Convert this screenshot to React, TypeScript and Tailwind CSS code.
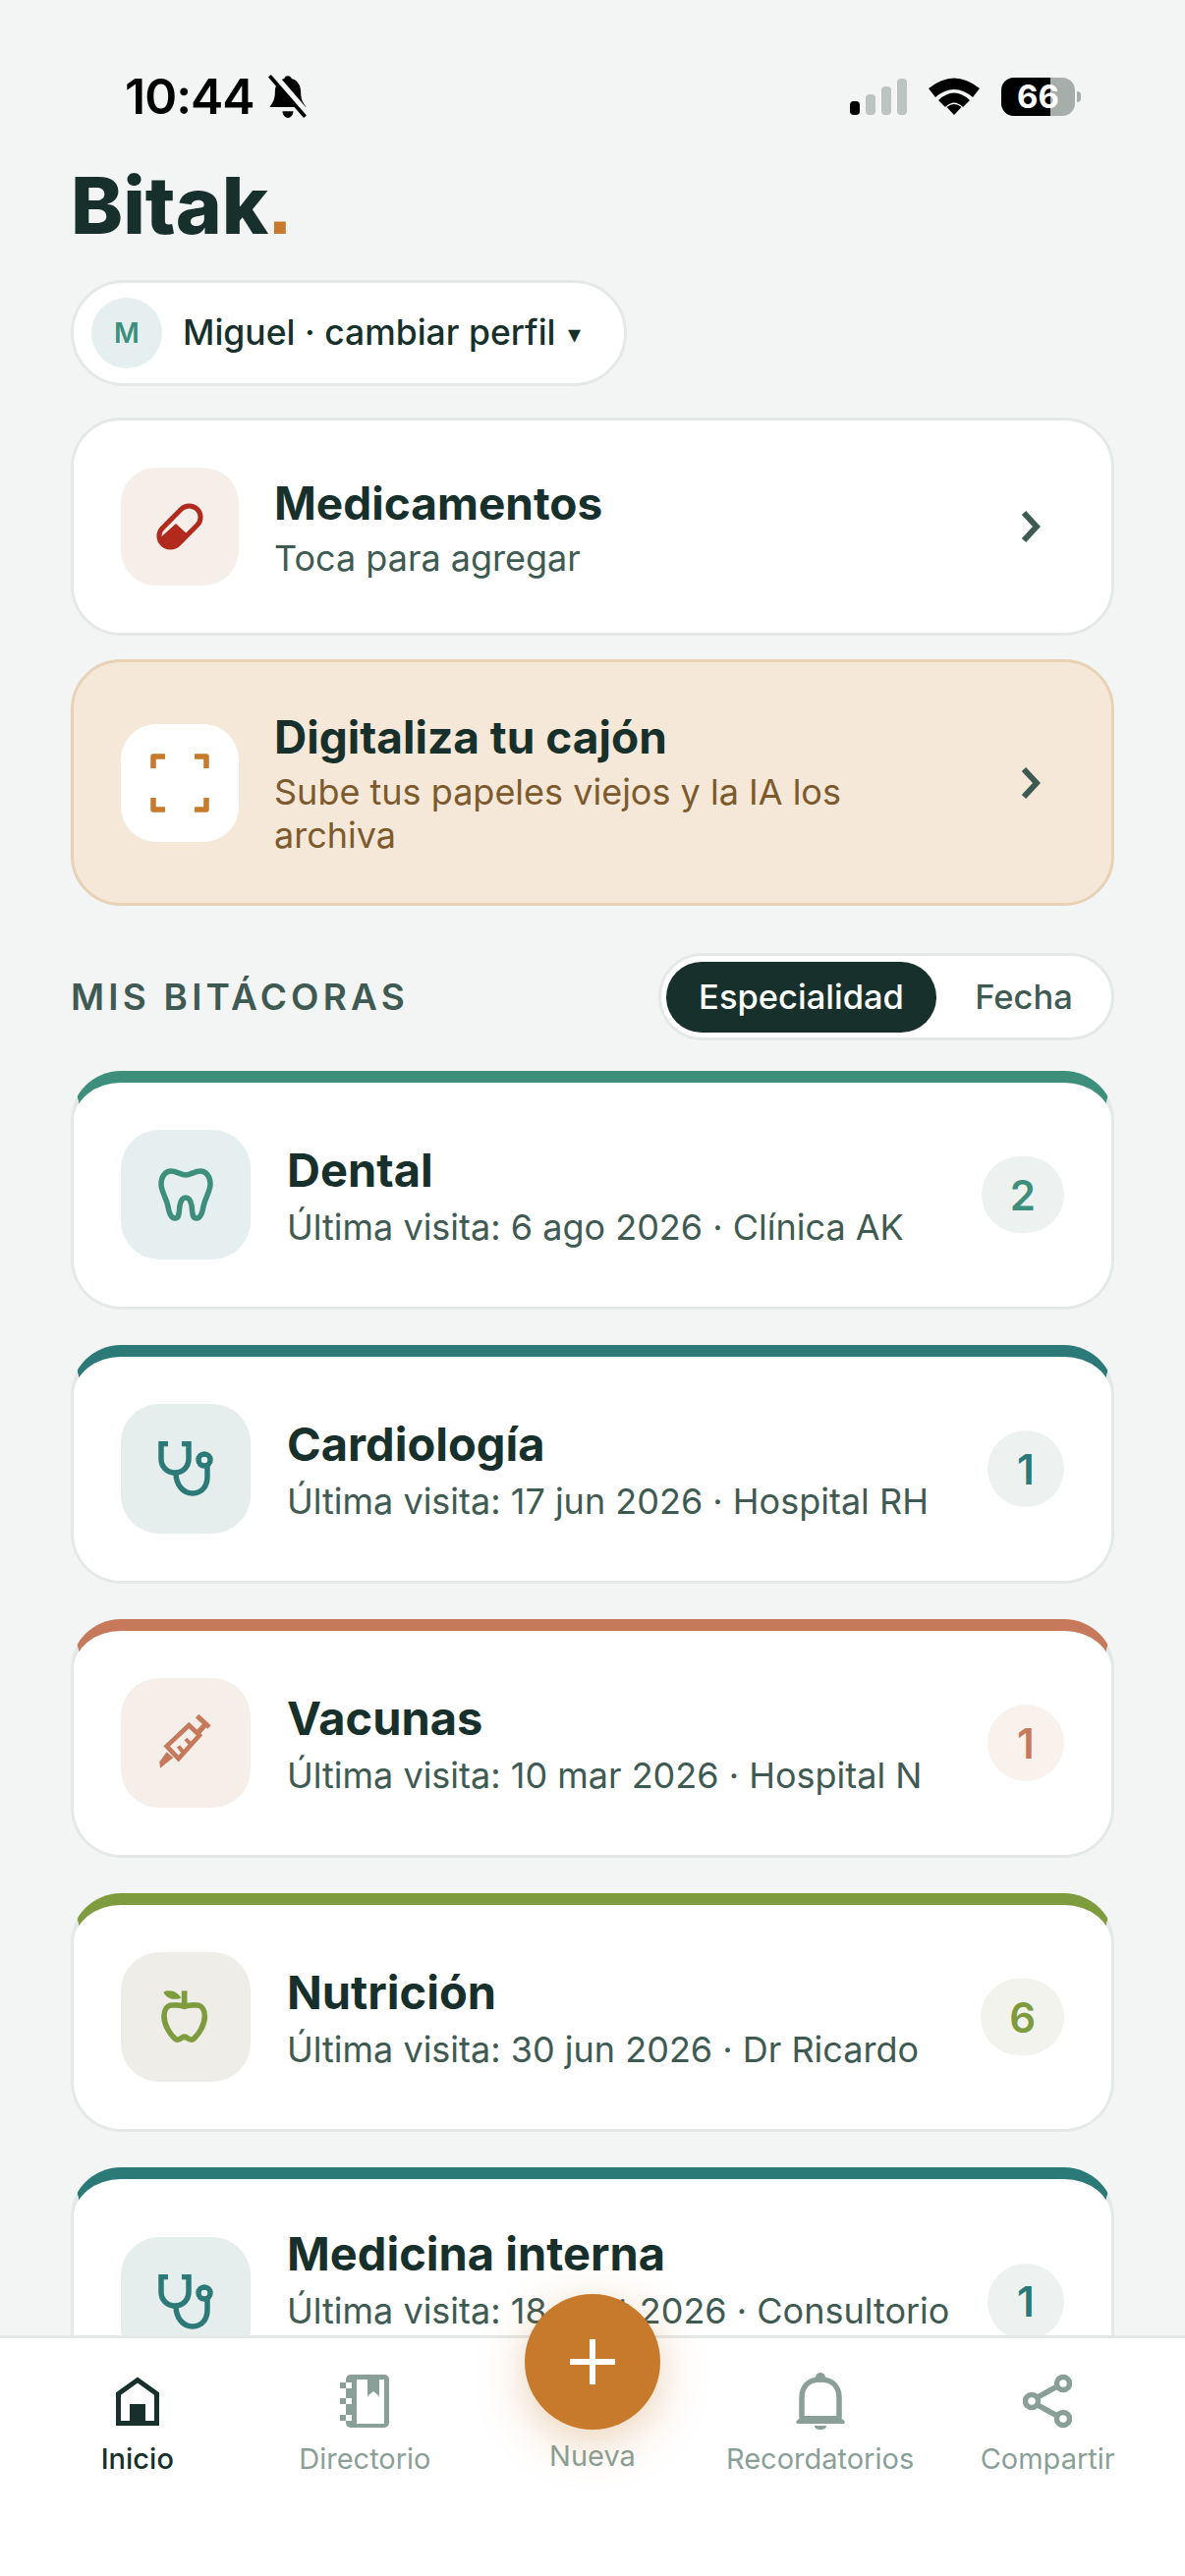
import type { ReactNode } from "react";

function BellOffIcon() {
  return (
    <svg width="44" height="46" viewBox="0 0 40 42" className="ml-[12px]">
      <path d="M20 2c2 0 3 1 3.400 2.600C29 6 32 11 32 17c0 7 2 10 5 14H3c3-4 5-7 5-14 0-6 3-11 8.600-12.400C17 3 18 2 20 2z" fill="#000" />
      <path d="M15 35h10c0 3-2 6-5 6s-5-3-5-6z" fill="#000" />
      <path d="M6 1l32 37" stroke="#f3f5f4" strokeWidth="7" />
      <path d="M3 2l33 38" stroke="#000" strokeWidth="3.500" />
    </svg>
  );
}

function SignalIcon() {
  return (
    <svg width="58" height="37" viewBox="0 0 58 37">
      <rect x="0" y="23" width="10" height="14" rx="4" fill="#000" />
      <rect x="16" y="16" width="10" height="21" rx="4" fill="#bcc4c1" />
      <rect x="32" y="8" width="10" height="29" rx="4" fill="#bcc4c1" />
      <rect x="48" y="0" width="10" height="37" rx="4" fill="#bcc4c1" />
    </svg>
  );
}

function WifiIcon() {
  return (
    <svg width="52" height="38" viewBox="0 0 52 38" fill="#000">
      <path d="M0 11Q26-10 52 11L45 20Q26 4 7 20z" />
      <path d="M10 23Q26 8 42 23L35 30Q26 21 17 30z" />
      <path d="M26 38L18.500 30Q26 24 33.500 30z" />
    </svg>
  );
}

function PillIcon() {
  return (
    <svg width="48" height="48" viewBox="0 0 48 48" fill="none">
      <defs>
        <clipPath id="pill-clip">
          <rect x="-1" y="12.500" width="50" height="23" rx="11.500" transform="rotate(-45 24 24)" />
        </clipPath>
      </defs>
      <rect x="-1" y="12.500" width="50" height="23" rx="11.500" transform="rotate(-45 24 24)" stroke="#b2291e" strokeWidth="5" />
      <path d="M0 39L20 21l12 11L20 48H0z" fill="#b2291e" clipPath="url(#pill-clip)" />
    </svg>
  );
}

function ScanIcon() {
  return (
    <svg width="60" height="60" viewBox="0 0 60 60" fill="none" stroke="#c77a2b" strokeWidth="5.500" strokeLinejoin="round">
      <path d="M3 15V3h12" />
      <path d="M45 3h12v12" />
      <path d="M3 45v12h12" />
      <path d="M45 57h12V45" />
    </svg>
  );
}

function ToothIcon({ color }: { color: string }) {
  return (
    <svg width="56" height="56" viewBox="0 0 56 56" fill="none" stroke={color} strokeWidth="5.500">
      <path d="M28 8c-5 0-9-4-15-4C7 4 3 10 3 17c0 8 5 13 7 23 1 6 3 12 7 12 5 0 4-7 5-13 1-5 3-8 6-8s5 3 6 8c1 6 0 13 5 13 4 0 6-6 7-12 2-10 7-15 7-23 0-7-4-13-10-13-6 0-10 4-15 4z" />
    </svg>
  );
}

function StethoscopeIcon({ color }: { color: string }) {
  return (
    <svg width="56" height="56" viewBox="0 0 56 56" fill="none" stroke={color} strokeWidth="5.500">
      <path d="M10 2.500H3V18c0 8 6 14 14 14s14-6 14-14V2.500h-7" />
      <path d="M18 32c0 12 7 21 17 21s15-8 15-17V26" />
      <circle cx="47" cy="19" r="6" />
    </svg>
  );
}

function SyringeIcon({ color }: { color: string }) {
  return (
    <svg width="80" height="80" viewBox="0 0 240 240" fill="none">
      <path d="M62 130L130 66 162 97 98 168z" stroke={color} strokeWidth="14" />
      <path d="M113 150L98 130M136 125L120 108" stroke={color} strokeWidth="12" />
      <path d="M158 88L178 66" stroke={color} strokeWidth="16" />
      <path d="M155 38L192 72" stroke={color} strokeWidth="15" />
      <path d="M62 148L40 178 42 197 82 165z" fill={color} />
    </svg>
  );
}

function AppleIcon({ color }: { color: string }) {
  return (
    <svg width="80" height="80" viewBox="0 0 240 240" fill="none">
      <path d="M116 88C100 82 85 84 78 84 62 84 54 100 54 118 54 145 72 172 86 185 92 191 100 190 106 185 112 180 120 180 126 185 132 190 140 191 146 185 160 172 178 145 178 118 178 100 170 84 154 84 147 84 132 82 116 88z" stroke={color} strokeWidth="17" />
      <path d="M116 40V92" stroke={color} strokeWidth="17" />
      <path d="M52 44C70 34 95 42 106 62 85 70 62 65 52 44z" fill={color} />
    </svg>
  );
}

function HomeIcon() {
  return (
    <svg width="44" height="50" viewBox="0 0 44 50" fill="none">
      <path d="M2.500 47.500V17.500L22 3.500l19.500 14v30z" stroke="#17302b" strokeWidth="5" />
      <rect x="14" y="28" width="16" height="20" fill="#17302b" />
    </svg>
  );
}

function NotebookIcon() {
  return (
    <svg width="50" height="54" viewBox="0 0 50 54">
      <rect x="6" y="0" width="44" height="54" rx="5" fill="#8a9f98" />
      <rect x="17" y="5" width="28" height="45" fill="#fff" />
      <path d="M28 5h12v17l-6-5-6 5z" fill="#8a9f98" />
      <rect x="0" y="8" width="6" height="6" fill="#8a9f98" />
      <rect x="6" y="8" width="6" height="6" fill="#fff" />
      <rect x="0" y="24" width="6" height="6" fill="#8a9f98" />
      <rect x="6" y="24" width="6" height="6" fill="#fff" />
      <rect x="0" y="41" width="6" height="6" fill="#8a9f98" />
      <rect x="6" y="41" width="6" height="6" fill="#fff" />
    </svg>
  );
}

function BellIcon() {
  return (
    <svg width="50" height="58" viewBox="0 0 50 58" fill="none">
      <path d="M6 46V26C6 14 13 7 25 7s19 7 19 19v20" stroke="#8a9f98" strokeWidth="5.500" />
      <circle cx="25" cy="5" r="5" fill="#8a9f98" />
      <path d="M0 50l6-6h38l6 6-1 2H1z" fill="#8a9f98" />
      <path d="M19 54h12c0 3-3 4-6 4s-6-1-6-4z" fill="#8a9f98" />
    </svg>
  );
}

function ShareIcon() {
  return (
    <svg width="50" height="54" viewBox="0 0 50 54" fill="none" stroke="#8a9f98" strokeWidth="5.500">
      <circle cx="41" cy="9" r="6.500" />
      <circle cx="9" cy="27" r="6.500" />
      <circle cx="41" cy="45" r="6.500" />
      <path d="M15 23l20-11M15 31l20 11" />
    </svg>
  );
}

function Chevron() {
  return (
    <svg width="20" height="34" viewBox="0 0 20 34" fill="none" stroke="#3f5a52" strokeWidth="6" className="shrink-0">
      <path d="M3 3l13 14L3 31" />
    </svg>
  );
}

type Entry = {
  name: string;
  detail: string;
  count: string;
  accent: string;
  boxBg: string;
  badgeBg: string;
  badgeText: string;
  icon: ReactNode;
  tall?: boolean;
};

const entries: Entry[] = [
  { name: "Dental", detail: "Última visita: 6 ago 2026 · Clínica AK", count: "2", accent: "border-t-[#3d8f7c]", boxBg: "bg-[#e6eff0]", badgeBg: "bg-[#edf2f0]", badgeText: "text-[#3d8f7c]", icon: <ToothIcon color="#3d8f7c" /> },
  { name: "Cardiología", detail: "Última visita: 17 jun 2026 · Hospital RH", count: "1", accent: "border-t-[#2b7a78]", boxBg: "bg-[#e6eded]", badgeBg: "bg-[#edf2f1]", badgeText: "text-[#2b7a78]", icon: <StethoscopeIcon color="#2b7a78" /> },
  { name: "Vacunas", detail: "Última visita: 10 mar 2026 · Hospital N", count: "1", accent: "border-t-[#c67a5b]", boxBg: "bg-[#f5eee9]", badgeBg: "bg-[#f8f1ec]", badgeText: "text-[#c67a5b]", icon: <SyringeIcon color="#c67a5b" /> },
  { name: "Nutrición", detail: "Última visita: 30 jun 2026 · Dr Ricardo", count: "6", accent: "border-t-[#7e9c3e]", boxBg: "bg-[#efede8]", badgeBg: "bg-[#f2f3ed]", badgeText: "text-[#7e9c3e]", icon: <AppleIcon color="#7e9c3e" /> },
  // this one wraps to a second line in the app, which sits behind the nav
  { name: "Medicina interna", detail: "Última visita: 18 sept 2026 · Consultorio", count: "1", accent: "border-t-[#2b7a78]", boxBg: "bg-[#e6eded]", badgeBg: "bg-[#edf2f1]", badgeText: "text-[#2b7a78]", icon: <StethoscopeIcon color="#2b7a78" />, tall: true },
];

function EntryCard({ entry }: { entry: Entry }) {
  return (
    <div className={`flex shrink-0 items-center rounded-[51px] border-x-[3px] border-b-[3px] border-t-[12px] border-x-[#e4e9e7] border-b-[#e4e9e7] bg-white px-[48px] ${entry.tall ? "h-[264px]" : "h-[243px]"} ${entry.accent}`}>
      <div className={`flex h-[132px] w-[132px] shrink-0 items-center justify-center rounded-[39px] ${entry.boxBg}`}>
        {entry.icon}
      </div>
      <div className={`ml-[37px] min-w-0 flex-1 ${entry.tall ? "pb-[44px]" : "pt-[4px]"}`}>
        <div className="text-[47px] font-bold leading-[58px] text-[#17302b]">{entry.name}</div>
        <div className="mt-[4px] whitespace-nowrap text-[36px] leading-[50px] text-[#3f5a52]">{entry.detail}</div>
      </div>
      <div className={`flex h-[78px] min-w-[78px] shrink-0 items-center justify-center rounded-full px-[29px] text-[42px] font-semibold ${entry.badgeBg} ${entry.badgeText}`}>
        {entry.count}
      </div>
    </div>
  );
}

const navItems = [
  { label: "Inicio", icon: <HomeIcon />, active: true },
  { label: "Directorio", icon: <NotebookIcon />, active: false },
  { label: "Nueva", icon: null, active: false },
  { label: "Recordatorios", icon: <BellIcon />, active: false },
  { label: "Compartir", icon: <ShareIcon />, active: false },
];

export default function App() {
  return (
    <div className="relative flex h-[2622px] w-[1206px] flex-col overflow-hidden bg-[#f3f5f4] font-['Inter',sans-serif]">
      <div className="flex-1 overflow-hidden px-[72px]">
        {/* status bar */}
        <div className="mt-[77px] flex h-[42px] items-center justify-between pl-[55px] pr-[34px]">
          <div className="flex items-center">
            <span className="text-[50px] font-semibold leading-none tracking-[-1px] text-black">10:44</span>
            <BellOffIcon />
          </div>
          <div className="flex items-center gap-[22px]">
            <SignalIcon />
            <WifiIcon />
            <div className="flex items-center gap-[2px]">
              <div className="relative h-[39px] w-[75px] overflow-hidden rounded-[13px] bg-[#a5aeaa]">
                <div className="h-full w-[50px] bg-black" />
                <span className="absolute inset-0 flex items-center justify-center text-[33px] font-bold leading-none text-white">66</span>
              </div>
              <div className="h-[11px] w-[4px] rounded-r-full bg-[#a5aeaa]" />
            </div>
          </div>
        </div>

        <div className="mt-[42px] h-[96px] text-[80px] font-extrabold leading-[96px] text-[#17302b]">
          Bitak<span className="font-['Liberation_Sans',sans-serif] text-[84px] font-bold leading-[0] text-[#c77a2b]">.</span>
        </div>

        <div className="mt-[28px] flex h-[108px] w-[566px] items-center rounded-full border-[3px] border-[#e4e9e7] bg-white pl-[18px]">
          <div className="flex h-[72px] w-[72px] items-center justify-center rounded-full bg-[#e6eff0] text-[28px] font-semibold text-[#3d8f7c]">M</div>
          <span className="ml-[21px] whitespace-nowrap text-[35.500px] font-medium text-[#17302b]">Miguel · cambiar perfil</span>
          <span className="ml-[12px] text-[26px] text-[#17302b]">▾</span>
        </div>

        <div className="mt-[32px] flex h-[222px] items-center rounded-[51px] border-[3px] border-[#e4e9e7] bg-white pl-[48px] pr-[72px]">
          <div className="flex h-[120px] w-[120px] shrink-0 items-center justify-center rounded-[36px] bg-[#f5eee9]">
            <PillIcon />
          </div>
          <div className="ml-[36px] flex-1 pt-[2px]">
            <div className="text-[46px] font-bold leading-[56px] text-[#17302b]">Medicamentos</div>
            <div className="mt-[5px] text-[36px] leading-[46px] text-[#3f5a52]">Toca para agregar</div>
          </div>
          <Chevron />
        </div>

        <div className="mt-[24px] flex h-[251px] items-center rounded-[51px] border-[3px] border-[#e8d2b6] bg-[#f5e8d8] pl-[48px] pr-[72px]">
          <div className="flex h-[120px] w-[120px] shrink-0 items-center justify-center rounded-[36px] bg-white">
            <ScanIcon />
          </div>
          <div className="ml-[36px] flex-1">
            <div className="text-[46px] font-bold leading-[56px] text-[#17302b]">Digitaliza tu cajón</div>
            <div className="mt-[6px] w-[640px] text-[36px] leading-[44px] text-[#7d5a2e]">Sube tus papeles viejos y la IA los archiva</div>
          </div>
          <Chevron />
        </div>

        <div className="mt-[48px] flex h-[89px] items-center justify-between">
          <span className="text-[37px] font-semibold tracking-[4.200px] text-[#3f5a52]">MIS BITÁCORAS</span>
          <div className="flex h-[89px] w-[464px] items-center rounded-full border-[3px] border-[#e4e9e7] bg-white pl-[5px]">
            <div className="flex h-[72px] w-[275px] items-center justify-center rounded-full bg-[#17302b] text-[34.500px] font-medium text-white">Especialidad</div>
            <div className="flex-1 text-center text-[34.500px] font-medium text-[#3f5a52]">Fecha</div>
          </div>
        </div>

        <div className="mt-[31px] flex flex-col gap-[36px]">
          {entries.map((entry) => (
            <EntryCard key={entry.name} entry={entry} />
          ))}
        </div>
      </div>

      {/* bottom nav */}
      <div className="relative h-[245px] shrink-0 border-t-[3px] border-[#e4e9e7] bg-white px-[24px]">
        <div className="absolute -top-[45px] left-[534px] flex h-[138px] w-[138px] items-center justify-center rounded-full bg-[#c77a2b] shadow-[0_12px_48px_rgba(199,122,43,0.35)]">
          <svg width="46" height="46" viewBox="0 0 46 46" stroke="#fff" strokeWidth="6">
            <path d="M23 0v46M0 23h46" />
          </svg>
        </div>
        <div className="grid grid-cols-5">
          {navItems.map((item) => (
            <div key={item.label} className="flex flex-col items-center">
              <div className="mt-[35px] flex h-[58px] items-center justify-center">{item.icon}</div>
              <span className={`whitespace-nowrap text-[29px] leading-[36px] ${item.icon ? "mt-[12px]" : "mt-[9px]"} ${item.active ? "font-medium text-[#17302b]" : "text-[#8a9f98]"}`}>{item.label}</span>
            </div>
          ))}
        </div>
      </div>
    </div>
  );
}
